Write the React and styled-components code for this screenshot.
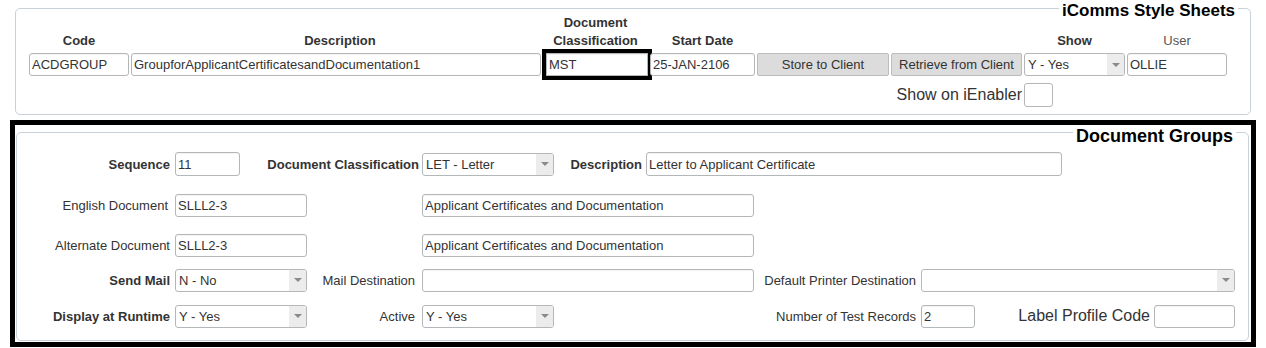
import React from 'react'
import styled, { createGlobalStyle } from 'styled-components'

const GlobalStyle = createGlobalStyle`
  body {
    margin: 0;
    background: #fff;
    font-family: "Liberation Sans", Arial, sans-serif;
    color: #333;
  }
`

const Page = styled.div`
  width: 1266px;
  height: 348px;
  overflow: hidden;
`

const Sheet = styled.fieldset`
  margin: 2px 0 0 15px;
  width: 1236px;
  box-sizing: border-box;
  border: 1px solid #c9d0d6;
  border-radius: 5px;
  padding: 0 0 7px 13px;
`

const Legend = styled.legend`
  margin-left: auto;
  margin-right: ${p => p.$right}px;
  padding: ${p => p.$pad}px 3px 0;
  font-size: ${p => p.$size}px;
  line-height: ${p => p.$lh}px;
  font-weight: bold;
  color: #000;
`

const TopGrid = styled.div`
  display: grid;
  grid-template-columns: 100px 410px 105px 105px 132px 131px 101px 100px;
  column-gap: 2px;
  row-gap: 3px;
  align-items: end;
`

const Head = styled.div`
  font-size: 13px;
  line-height: 18px;
  text-align: center;
  padding-left: ${p => p.$shift || 0}px;
  font-weight: ${p => (p.$plain ? 'normal' : 'bold')};
  color: ${p => (p.$plain ? '#555' : '#333')};
`

const Field = styled.input`
  box-sizing: border-box;
  width: ${p => (p.$w ? `${p.$w}px` : '100%')};
  height: ${p => p.$h || 23}px;
  flex: none;
  margin: 0;
  padding: 0 2px;
  border: 1px solid #b3b7ba;
  border-radius: ${p => (p.$marked ? 0 : 3)}px;
  background: #fff;
  box-shadow: inset 0 1px 1px rgba(0, 0, 0, 0.05);
  font: 13px "Liberation Sans", Arial, sans-serif;
  color: #333;
  justify-self: end;
  outline: ${p => (p.$marked ? '4px solid #000' : 'none')};
`

const Button = styled.button`
  box-sizing: border-box;
  width: 100%;
  height: 23px;
  margin: 0;
  padding: 0;
  border: 1px solid #bcbcbc;
  border-radius: 2px;
  background: #dcdcdc;
  font: 13px "Liberation Sans", Arial, sans-serif;
  color: #333;
`

const SelectBox = styled.div`
  box-sizing: border-box;
  width: ${p => (p.$w ? `${p.$w}px` : '100%')};
  height: 23px;
  flex: none;
  display: flex;
  align-items: stretch;
  border: 1px solid #b3b7ba;
  border-radius: 3px;
  background: #fff;
  overflow: hidden;
  font-size: 13px;
  color: #333;
`

const SelectText = styled.span`
  flex: 1;
  padding-left: 3px;
  line-height: 21px;
  white-space: nowrap;
  overflow: hidden;
`

const SelectArrow = styled.span`
  width: 17px;
  background: #ececec;
  display: flex;
  align-items: center;
  justify-content: center;
  &::after {
    content: '';
    border-left: 4px solid transparent;
    border-right: 4px solid transparent;
    border-top: 4px solid #8a8a8a;
  }
`

const Enabler = styled.div`
  grid-column: 1 / 7;
  justify-self: end;
  align-self: center;
  margin-top: 4px;
  font-size: 16px;
  color: #333;
`

const CheckBox = styled.div`
  width: 29px;
  height: 24px;
  margin-top: 4px;
  box-sizing: border-box;
  border: 1px solid #b3b7ba;
  border-radius: 3px;
  background: #fff;
`

const Frame = styled.div`
  margin: 5px 0 0 10px;
  width: 1246px;
  box-sizing: border-box;
  border: 5px solid #000;
  padding: 0 2px 1px 1px;
`

const Groups = styled.fieldset`
  margin: -5px 0 0 0;
  border: 1px solid #c9d0d6;
  border-radius: 5px;
  padding: 7px 0 12px 1px;
`

const Row = styled.div`
  display: flex;
  align-items: center;
  height: 24px;
  margin-top: ${p => p.$gap || 0}px;
`

const Label = styled.label`
  box-sizing: border-box;
  flex: none;
  width: ${p => p.$w}px;
  padding-right: ${p => p.$pad ?? 5}px;
  text-align: right;
  white-space: nowrap;
  font-size: ${p => p.$size || 13}px;
  font-weight: ${p => (p.$bold ? 'bold' : 'normal')};
  color: #333;
`

function Select({ w, value }) {
  return (
    <SelectBox $w={w}>
      <SelectText>{value}</SelectText>
      <SelectArrow />
    </SelectBox>
  )
}

export default function App() {
  return (
    <Page>
      <GlobalStyle />
      <Sheet>
        <Legend $right={12} $pad={5} $lh={7} $size={17}>iComms Style Sheets</Legend>
        <TopGrid>
          <Head>Code</Head>
          <Head $shift={8}>Description</Head>
          <Head>Document Classification</Head>
          <Head>Start Date</Head>
          <span />
          <span />
          <Head>Show</Head>
          <Head $plain>User</Head>

          <Field readOnly defaultValue="ACDGROUP" />
          <Field readOnly defaultValue="GroupforApplicantCertificatesandDocumentation1" />
          <Field readOnly defaultValue="MST" $w={102} $marked />
          <Field readOnly defaultValue="25-JAN-2106" />
          <Button>Store to Client</Button>
          <Button>Retrieve from Client</Button>
          <Select value="Y - Yes" />
          <Field readOnly defaultValue="OLLIE" />

          <Enabler>Show on iEnabler</Enabler>
          <CheckBox />
        </TopGrid>
      </Sheet>

      <Frame>
        <Groups>
          <Legend $right={12} $pad={7} $lh={18} $size={18}>Document Groups</Legend>
          <Row>
            <Label $w={157} $bold>Sequence</Label>
            <Field readOnly defaultValue="11" $w={65} $h={24} />
            <Label $w={182} $pad={3} $bold>Document Classification</Label>
            <Select w={132} value="LET - Letter" />
            <Label $w={92} $pad={4} $bold>Description</Label>
            <Field readOnly defaultValue="Letter to Applicant Certificate" $w={416} $h={24} />
          </Row>
          <Row $gap={17}>
            <Label $w={157} $pad={7}>English Document</Label>
            <Field readOnly defaultValue="SLLL2-3" $w={132} />
            <Label $w={115} />
            <Field readOnly defaultValue="Applicant Certificates and Documentation" $w={332} />
          </Row>
          <Row $gap={16}>
            <Label $w={157}>Alternate Document</Label>
            <Field readOnly defaultValue="SLLL2-3" $w={132} />
            <Label $w={115} />
            <Field readOnly defaultValue="Applicant Certificates and Documentation" $w={332} />
          </Row>
          <Row $gap={11}>
            <Label $w={157} $bold>Send Mail</Label>
            <Select w={132} value="N - No" />
            <Label $w={115} $pad={7}>Mail Destination</Label>
            <Field readOnly defaultValue="" $w={332} />
            <Label $w={167}>Default Printer Destination</Label>
            <Select w={314} value="" />
          </Row>
          <Row $gap={12}>
            <Label $w={157} $bold>Display at Runtime</Label>
            <Select w={132} value="Y - Yes" />
            <Label $w={115} $pad={7}>Active</Label>
            <Select w={132} value="Y - Yes" />
            <Label $w={367}>Number of Test Records</Label>
            <Field readOnly defaultValue="2" $w={54} />
            <Label $w={179} $pad={4} $size={16}>Label Profile Code</Label>
            <Field readOnly defaultValue="" $w={81} />
          </Row>
        </Groups>
      </Frame>
    </Page>
  )
}
